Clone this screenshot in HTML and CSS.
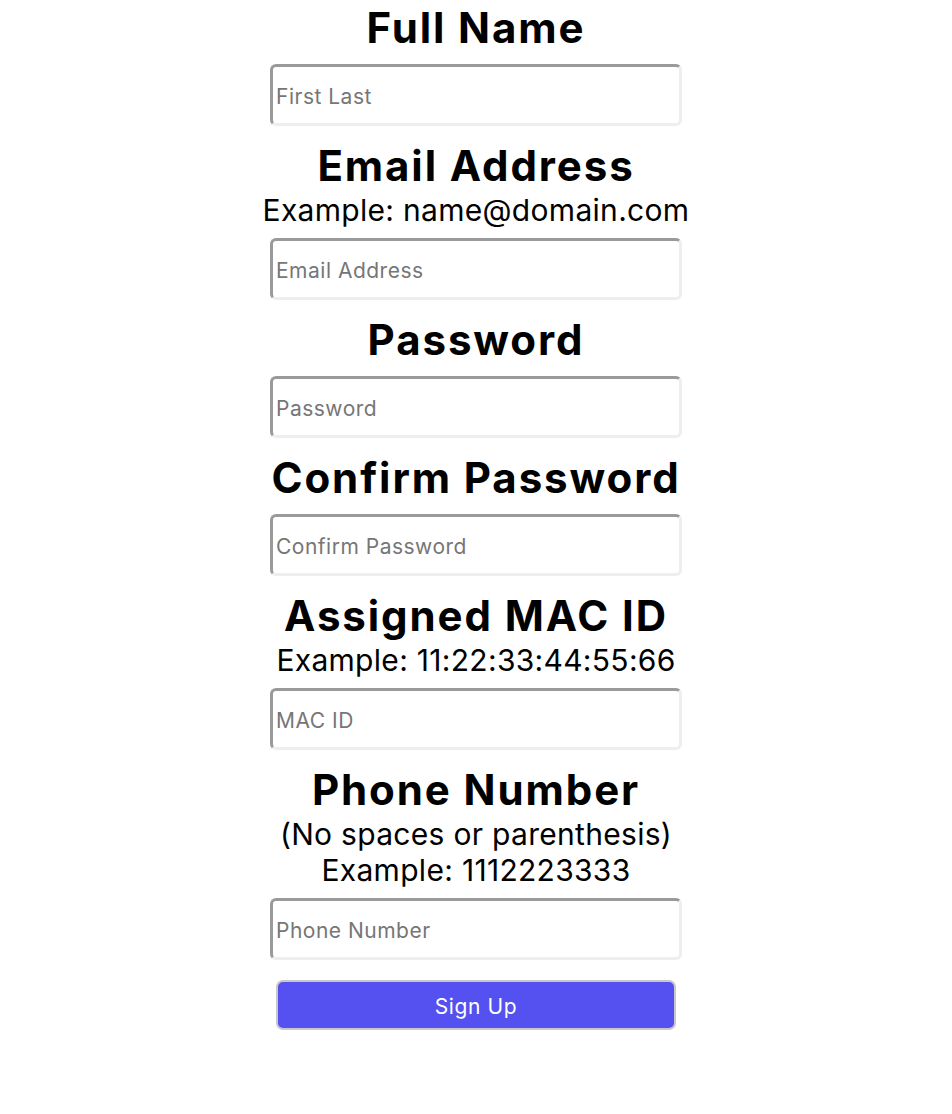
FILE: index.html
```html
<!DOCTYPE html>
<html>
<head>
<meta charset="utf-8">
<link rel="stylesheet" href="styles.css">
</head>
<body>
<form class="signup">
  <h2 class="label first">Full Name</h2>
  <input class="field" type="text" placeholder="First Last">

  <h2 class="label">Email Address</h2>
  <p class="hint">Example: name@domain.com</p>
  <input class="field" type="text" placeholder="Email Address">

  <h2 class="label">Password</h2>
  <input class="field" type="password" placeholder="Password">

  <h2 class="label">Confirm Password</h2>
  <input class="field" type="password" placeholder="Confirm Password">

  <h2 class="label">Assigned MAC ID</h2>
  <p class="hint">Example: 11:22:33:44:55:66</p>
  <input class="field" type="text" placeholder="MAC ID">

  <h2 class="label">Phone Number</h2>
  <p class="hint">(No spaces or parenthesis)<br>Example: 1112223333</p>
  <input class="field" type="text" placeholder="Phone Number">

  <button class="submit" type="button">Sign Up</button>
</form>
</body>
</html>
```

FILE: styles.css
```css
html, body {
  margin: 0;
  padding: 0;
  background: #ffffff;
}

body {
  font-family: Inter, "Noto Sans", sans-serif;
  color: #000000;
}

.signup {
  display: flex;
  flex-direction: column;
  align-items: center;
  padding-top: 4px;
}

.label {
  font-size: 42px;
  line-height: 48px;
  font-weight: 700;
  letter-spacing: 1.9px;
  margin: 16px 0 0 0;
  text-align: center;
}

.label.first {
  margin-top: 0;
}

.hint {
  font-size: 30px;
  line-height: 36px;
  letter-spacing: 0.3px;
  margin: 0;
  padding-top: 2px;
  text-align: center;
}

.field {
  box-sizing: border-box;
  width: 412px;
  height: 62px;
  margin-top: 12px;
  padding: 2px 3px 0 3px;
  border-width: 3px;
  border-style: solid;
  border-color: #9a9a9a #eeeeee #eeeeee #9a9a9a;
  border-radius: 6px;
  font-family: Inter, "Noto Sans", sans-serif;
  font-size: 21px;
  letter-spacing: 0.5px;
  color: #000;
  background: #fff;
  outline: none;
}

.hint + .field {
  margin-top: 10px;
}

.field::placeholder {
  color: #767676;
}

.submit {
  box-sizing: border-box;
  width: 400px;
  height: 50px;
  margin-top: 20px;
  padding: 2px 0 0 0;
  border: 2px solid #c8c8cc;
  border-radius: 7px;
  background: #5550f0;
  color: #ffffff;
  font-family: Inter, "Noto Sans", sans-serif;
  font-size: 21px;
  letter-spacing: 0.6px;
}
```
